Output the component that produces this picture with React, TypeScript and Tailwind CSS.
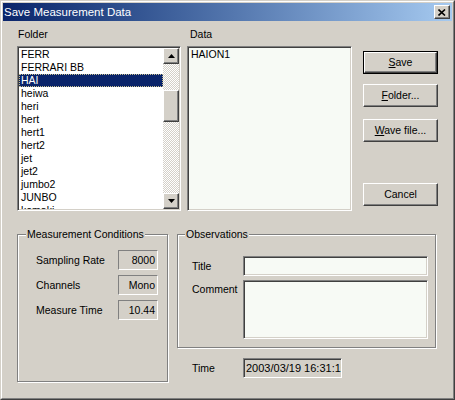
import React from "react";

const sunken =
  "border border-t-[#808080] border-l-[#808080] border-b-white border-r-white shadow-[inset_1px_1px_0_#404040,inset_-1px_-1px_0_#d4d0c8]";
const raised =
  "border border-t-white border-l-white border-b-[#404040] border-r-[#404040] shadow-[inset_-1px_-1px_0_#808080] bg-[#d4d0c8]";
const etched =
  "border border-[#808080] shadow-[inset_1px_1px_0_#ffffff,1px_1px_0_#ffffff]";
const staticEdge =
  "border border-t-[#808080] border-l-[#808080] border-b-white border-r-white";

function Btn({ children, def }: { children: React.ReactNode; def?: boolean }) {
  if (def) {
    return (
      <div className="w-[75px] h-[23px] border border-black">
        <div className={`w-full h-full flex items-center justify-center ${raised}`}>{children}</div>
      </div>
    );
  }
  return (
    <div className={`w-[75px] h-[23px] flex items-center justify-center ${raised}`}>{children}</div>
  );
}

function Arrow({ up }: { up?: boolean }) {
  return (
    <div className={`w-[16px] h-[16px] flex items-center justify-center ${raised}`}>
      <svg width="7" height="4" viewBox="0 0 7 4">
        {up ? <polygon points="3.5,0 7,4 0,4" fill="#000" /> : <polygon points="0,0 7,0 3.5,4" fill="#000" />}
      </svg>
    </div>
  );
}

const folders = ["FERR", "FERRARI BB", "HAI", "heiwa", "heri", "hert", "hert1", "hert2", "jet", "jet2", "jumbo2", "JUNBO", "komaki"];

export default function App() {
  return (
    <div className="w-[455px] h-[400px] bg-[#d4d0c8] border border-t-[#d4d0c8] border-l-[#d4d0c8] border-b-[#404040] border-r-[#404040] font-['Liberation_Sans',Arial,sans-serif] text-[10.5px] leading-[13px] text-black">
      <div className="w-full h-full border border-t-white border-l-white border-b-[#808080] border-r-[#808080] p-[1px] flex flex-col">
        {/* Title bar */}
        <div className="h-[18px] flex items-center justify-between bg-linear-to-r from-[#0a246a] to-[#a6caf0] pl-[1px] pr-[2px]">
          <span className="text-white text-[11.5px] leading-[14px]">Save Measurement Data</span>
          <div className={`w-[16px] h-[14px] flex items-center justify-center ${raised}`}>
            <svg width="8" height="7" viewBox="0 0 8 7">
              <path d="M0.5 0.5 L7 6.5 M7 0.5 L0.5 6.5" stroke="#000" strokeWidth="1.6" />
            </svg>
          </div>
        </div>

        <div className="pl-[14px] flex flex-col">
          {/* Top section */}
          <div className="flex mt-[7px]">
            <div className="w-[164px] flex flex-col">
              <div className="h-[13px] pl-[1px]">Folder</div>
              <div className={`mt-[5px] h-[165px] bg-white flex p-[1px] ${sunken}`}>
                <div className="w-[144px] h-full overflow-hidden">
                  {folders.map((f) => (
                    <div
                      key={f}
                      className={
                        f === "HAI"
                          ? "h-[13px] pl-[2px] bg-[#0a246a] text-white outline-1 outline-dotted -outline-offset-1 outline-[#c8c090]"
                          : "h-[13px] pl-[2px]"
                      }
                    >
                      {f}
                    </div>
                  ))}
                </div>
                <div className="w-[16px] h-full flex flex-col">
                  <Arrow up />
                  <div className="flex-1 flex flex-col bg-[conic-gradient(#ffffff_25%,#d4d0c8_0_50%,#ffffff_0_75%,#d4d0c8_0)] bg-[length:2px_2px]">
                    <div className={`mt-[26px] h-[32px] w-[16px] ${raised}`} />
                  </div>
                  <Arrow />
                </div>
              </div>
            </div>

            <div className="ml-[6px] w-[165px] flex flex-col">
              <div className="h-[13px] pl-[3px]">Data</div>
              <div className={`mt-[5px] h-[165px] bg-[#f7faf5] pl-[3px] pt-[1px] ${sunken}`}>
                <div className="h-[13px]">HAION1</div>
              </div>
            </div>

            <div className="ml-[11px] mt-[23px] flex flex-col">
              <Btn def>
                <span><span className="underline">S</span>ave</span>
              </Btn>
              <div className="mt-[10px]">
                <Btn>
                  <span><span className="underline">F</span>older...</span>
                </Btn>
              </div>
              <div className="mt-[12px]">
                <Btn>
                  <span><span className="underline">W</span>ave file...</span>
                </Btn>
              </div>
              <div className="mt-[41px]">
                <Btn>Cancel</Btn>
              </div>
            </div>
          </div>

          {/* Bottom section */}
          <div className="flex mt-[23px] items-start">
            <div className={`relative w-[151px] h-[148px] pt-[15px] pl-[18px] ${etched}`}>
              <span className="absolute -top-[7px] left-[8px] px-[1px] bg-[#d4d0c8]">Measurement Conditions</span>
              <div className="flex flex-col gap-[5px]">
                {[
                  ["Sampling Rate", "8000"],
                  ["Channels", "Mono"],
                  ["Measure Time", "10.44"],
                ].map(([l, v]) => (
                  <div key={l} className="flex items-center h-[20px]">
                    <div className="w-[82px]">{l}</div>
                    <div className={`w-[40px] h-[20px] flex items-center justify-end pr-[2px] ${staticEdge}`}>{v}</div>
                  </div>
                ))}
              </div>
            </div>

            <div className="ml-[9px] flex flex-col">
              <div className={`relative w-[259px] h-[114px] pt-[21px] pl-[14px] ${etched}`}>
                <span className="absolute -top-[7px] left-[7px] px-[1px] bg-[#d4d0c8]">Observations</span>
                <div className="flex items-center h-[20px]">
                  <div className="w-[51px]">Title</div>
                  <div className={`w-[185px] h-[20px] bg-[#f7faf5] ${sunken}`} />
                </div>
                <div className="flex items-start mt-[4px]">
                  <div className="w-[51px] mt-[3px]">Comment</div>
                  <div className={`w-[185px] h-[59px] bg-[#f7faf5] ${sunken}`} />
                </div>
              </div>
              <div className="flex items-center mt-[10px] pl-[15px]">
                <div className="w-[51px]">Time</div>
                <div className={`w-[99px] h-[20px] flex items-center pl-[2px] overflow-hidden whitespace-nowrap text-[11px] ${sunken}`}>
                  2003/03/19 16:31:15
                </div>
              </div>
            </div>
          </div>
        </div>
      </div>
    </div>
  );
}
